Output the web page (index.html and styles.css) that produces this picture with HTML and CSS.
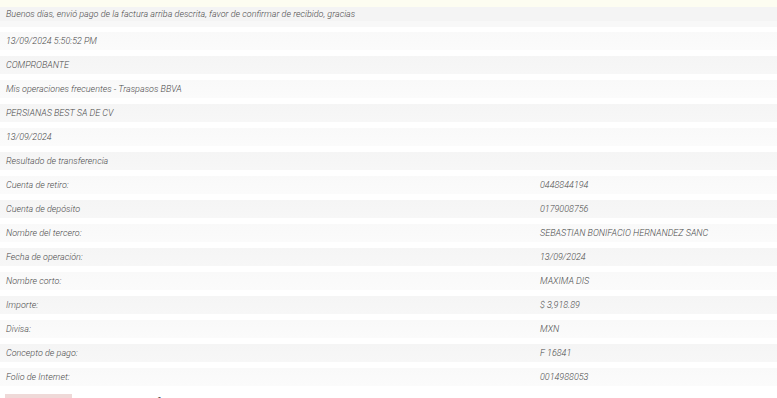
FILE: index.html
```html
<!DOCTYPE html>
<html lang="es">
<head>
<meta charset="utf-8">
<title>Comprobante</title>
<link rel="stylesheet" href="styles.css">
</head>
<body>
<div class="topbar"></div>
<div class="list">
  <div class="row first"><span class="cell">Buenos días, envió pago de la factura arriba descrita, favor de confirmar de recibido, gracias</span></div>
  <div class="row"><span class="cell">13/09/2024 5:50:52 PM</span></div>
  <div class="row"><span class="cell">COMPROBANTE</span></div>
  <div class="row"><span class="cell">Mis operaciones frecuentes - Traspasos BBVA</span></div>
  <div class="row"><span class="cell">PERSIANAS BEST SA DE CV</span></div>
  <div class="row"><span class="cell">13/09/2024</span></div>
  <div class="row"><span class="cell">Resultado de transferencia</span></div>
  <div class="row pair"><span class="cell">Cuenta de retiro:</span><span class="cell">0448844194</span></div>
  <div class="row pair"><span class="cell">Cuenta de depósito</span><span class="cell">0179008756</span></div>
  <div class="row pair"><span class="cell">Nombre del tercero:</span><span class="cell">SEBASTIAN BONIFACIO HERNANDEZ SANC</span></div>
  <div class="row pair"><span class="cell">Fecha de operación:</span><span class="cell">13/09/2024</span></div>
  <div class="row pair"><span class="cell">Nombre corto:</span><span class="cell">MAXIMA DIS</span></div>
  <div class="row pair"><span class="cell">Importe:</span><span class="cell">$ 3,918.89</span></div>
  <div class="row pair"><span class="cell">Divisa:</span><span class="cell">MXN</span></div>
  <div class="row pair"><span class="cell">Concepto de pago:</span><span class="cell">F 16841</span></div>
  <div class="row pair"><span class="cell">Folio de Internet:</span><span class="cell">0014988053</span></div>
  <div class="note">
    <span class="badge"></span>
    <span class="note-text">El envío de los fondos se ha realizado con éxito a la cuenta indicada, para cualquier aclaración conserve este comprobante de la operación bancaria.</span>
  </div>
</div>
</body>
</html>
```

FILE: styles.css
```css
html, body {
  margin: 0;
  padding: 0;
  background: #ffffff;
}
body {
  font-family: Roboto, "Liberation Sans", Arial, sans-serif;
  font-size: 9px;
  font-style: italic;
  font-weight: 300;
  color: #4a4a4a;
  overflow: hidden;
  height: 398px;
}
.topbar {
  height: 7px;
  background: #fdfdf1;
}
.list {
  display: flex;
  flex-direction: column;
}
.row {
  display: grid;
  grid-template-columns: 1fr;
  height: 18px;
  margin-bottom: 6px;
  background: linear-gradient(#f5f5f5, #f7f7f7);
  align-items: center;
  padding-left: 6px;
}
.row.first {
  height: 14px;
  margin-bottom: 11px;
  background: #f4f4f4;
  box-shadow: 0 6px 0 #f8f8f8;
}
.row:nth-child(even) {
  background: linear-gradient(#f9f9f9, #fbfbfb);
}
.row.pair {
  grid-template-columns: 534px 1fr;
}
.cell {
  white-space: nowrap;
  line-height: 12px;
}
.note {
  display: flex;
  align-items: flex-start;
  margin-top: 2px;
  padding-left: 5px;
}
.badge {
  width: 67px;
  height: 14px;
  background: #efd9d8;
  flex: none;
}
.note-text {
  flex: 1;
  font-style: normal;
  font-weight: 400;
  font-size: 11.5px;
  color: #555;
  line-height: 14px;
  padding-left: 2px;
  margin-top: 1px;
  letter-spacing: 0.4px;
}
```
